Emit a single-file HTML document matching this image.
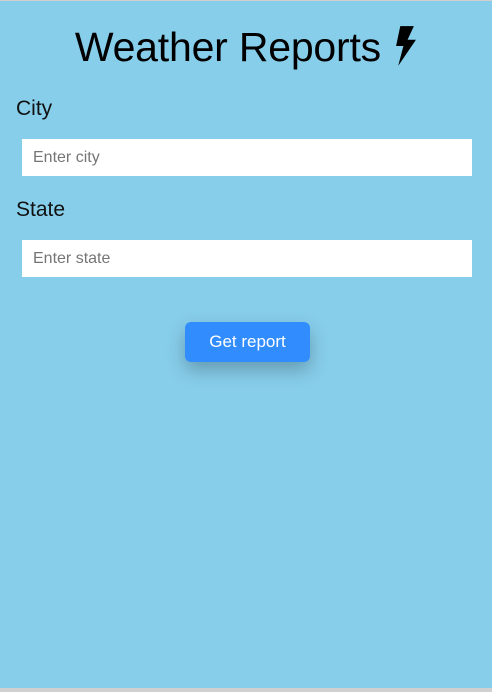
<!DOCTYPE html>
<html><head><style>
html,body{margin:0;padding:0;width:492px;height:692px;background:#d0d0d0;overflow:hidden}
.panel{position:absolute;left:0;top:1px;width:492px;height:687px;background:#87ceeb}
h1{position:absolute;left:0;width:492px;top:22px;margin:0;text-align:center;font:300 41px/48px "Liberation Sans",sans-serif;color:#000;letter-spacing:-0.2px}
.lbl{position:absolute;left:16px;font:300 21px "Liberation Sans",sans-serif;color:#111}
.inp{position:absolute;left:22px;width:450px;height:37px;background:#fff;font:16px "Liberation Sans",sans-serif;color:#757575;line-height:37px;padding-left:11px;box-sizing:border-box}
.btn{position:absolute;left:185px;top:321px;width:125px;height:40px;border-radius:6px;background:#318cfe;color:#fff;font:17px/40px "Liberation Sans",sans-serif;text-align:center;box-shadow:0 8px 18px rgba(0,0,0,0.25)}
</style></head><body>
<div class="panel">
<h1>Weather Reports <svg width="23" height="40" viewBox="0 0 22 38" style="vertical-align:-5px;margin-left:2px"><path d="M6 0H19L13 13H21L4 38L9 19H2Z" fill="#000"/></svg></h1>
<div class="lbl" style="top:96px">City</div>
<div class="inp" style="top:138px">Enter city</div>
<div class="lbl" style="top:197px">State</div>
<div class="inp" style="top:239px">Enter state</div>
<div class="btn">Get report</div>
</div>
</body></html>
